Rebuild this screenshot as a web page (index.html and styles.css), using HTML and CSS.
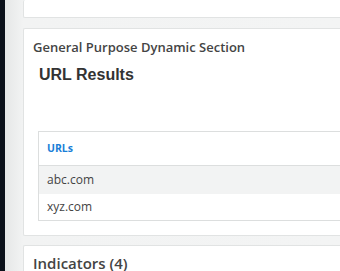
FILE: index.html
```html
<!DOCTYPE html>
<html>
<head>
<meta charset="utf-8">
<link rel="stylesheet" href="styles.css">
</head>
<body>
<div class="app">
  <div class="sidebar"></div>
  <div class="main">
    <div class="card card-top"></div>
    <div class="card section">
      <div class="section-title">General Purpose Dynamic Section</div>
      <div class="widget-title">URL Results</div>
      <div class="table">
        <div class="th">URLs</div>
        <div class="row alt">abc.com</div>
        <div class="row">xyz.com</div>
      </div>
    </div>
    <div class="card section section-ind">
      <div class="section-title big">Indicators (4)</div>
    </div>
  </div>
</div>
</body>
</html>
```
FILE: styles.css
```css
html, body {
  margin: 0;
  padding: 0;
  height: 100%;
  overflow: hidden;
}
body {
  font-family: "Open Sans", "Noto Sans", sans-serif;
  background: #f3f4f4;
}
.app {
  display: flex;
  height: 100%;
}
.sidebar {
  width: 5px;
  flex: none;
  background: #0b111a;
}
.main {
  flex: 1;
  padding-left: 18px;
  background: linear-gradient(to right, #e5e7e7 0, #f2f3f3 18px, #f3f4f4 100%);
  display: flex;
  flex-direction: column;
  gap: 10px;
}
.card {
  background: #fff;
  border: 1px solid #e1e3e3;
  border-right: none;
  border-radius: 2px 0 0 2px;
}
.card-top {
  height: 17px;
  border-top: none;
  flex: none;
}
.section {
  padding: 9px 0 0 9px;
  flex: none;
}
.section-ind {
  margin-top: -1px;
  padding-top: 7px;
}
.section-title {
  font-size: 13px;
  font-weight: 600;
  color: #444;
  line-height: 18px;
}
.section-title.big {
  font-size: 15px;
  line-height: 20px;
}
.widget-title {
  font-family: "Liberation Sans", Arial, sans-serif;
  font-weight: bold;
  font-size: 16px;
  color: #333;
  margin: 9px 0 0 6px;
  line-height: 20px;
}
.table {
  margin: 46px 0 14px 5px;
  border: 1px solid #dcdede;
  border-right: none;
}
.th {
  height: 33px;
  line-height: 33px;
  padding-left: 8px;
  font-size: 10.5px;
  font-weight: 700;
  color: #1a7fd8;
  border-bottom: 1px solid #dcdede;
}
.row {
  height: 26px;
  line-height: 26px;
  padding-left: 8px;
  font-size: 12px;
  color: #444;
}
.row.alt {
  height: 28px;
  line-height: 28px;
  background: #f2f3f3;
}
```
